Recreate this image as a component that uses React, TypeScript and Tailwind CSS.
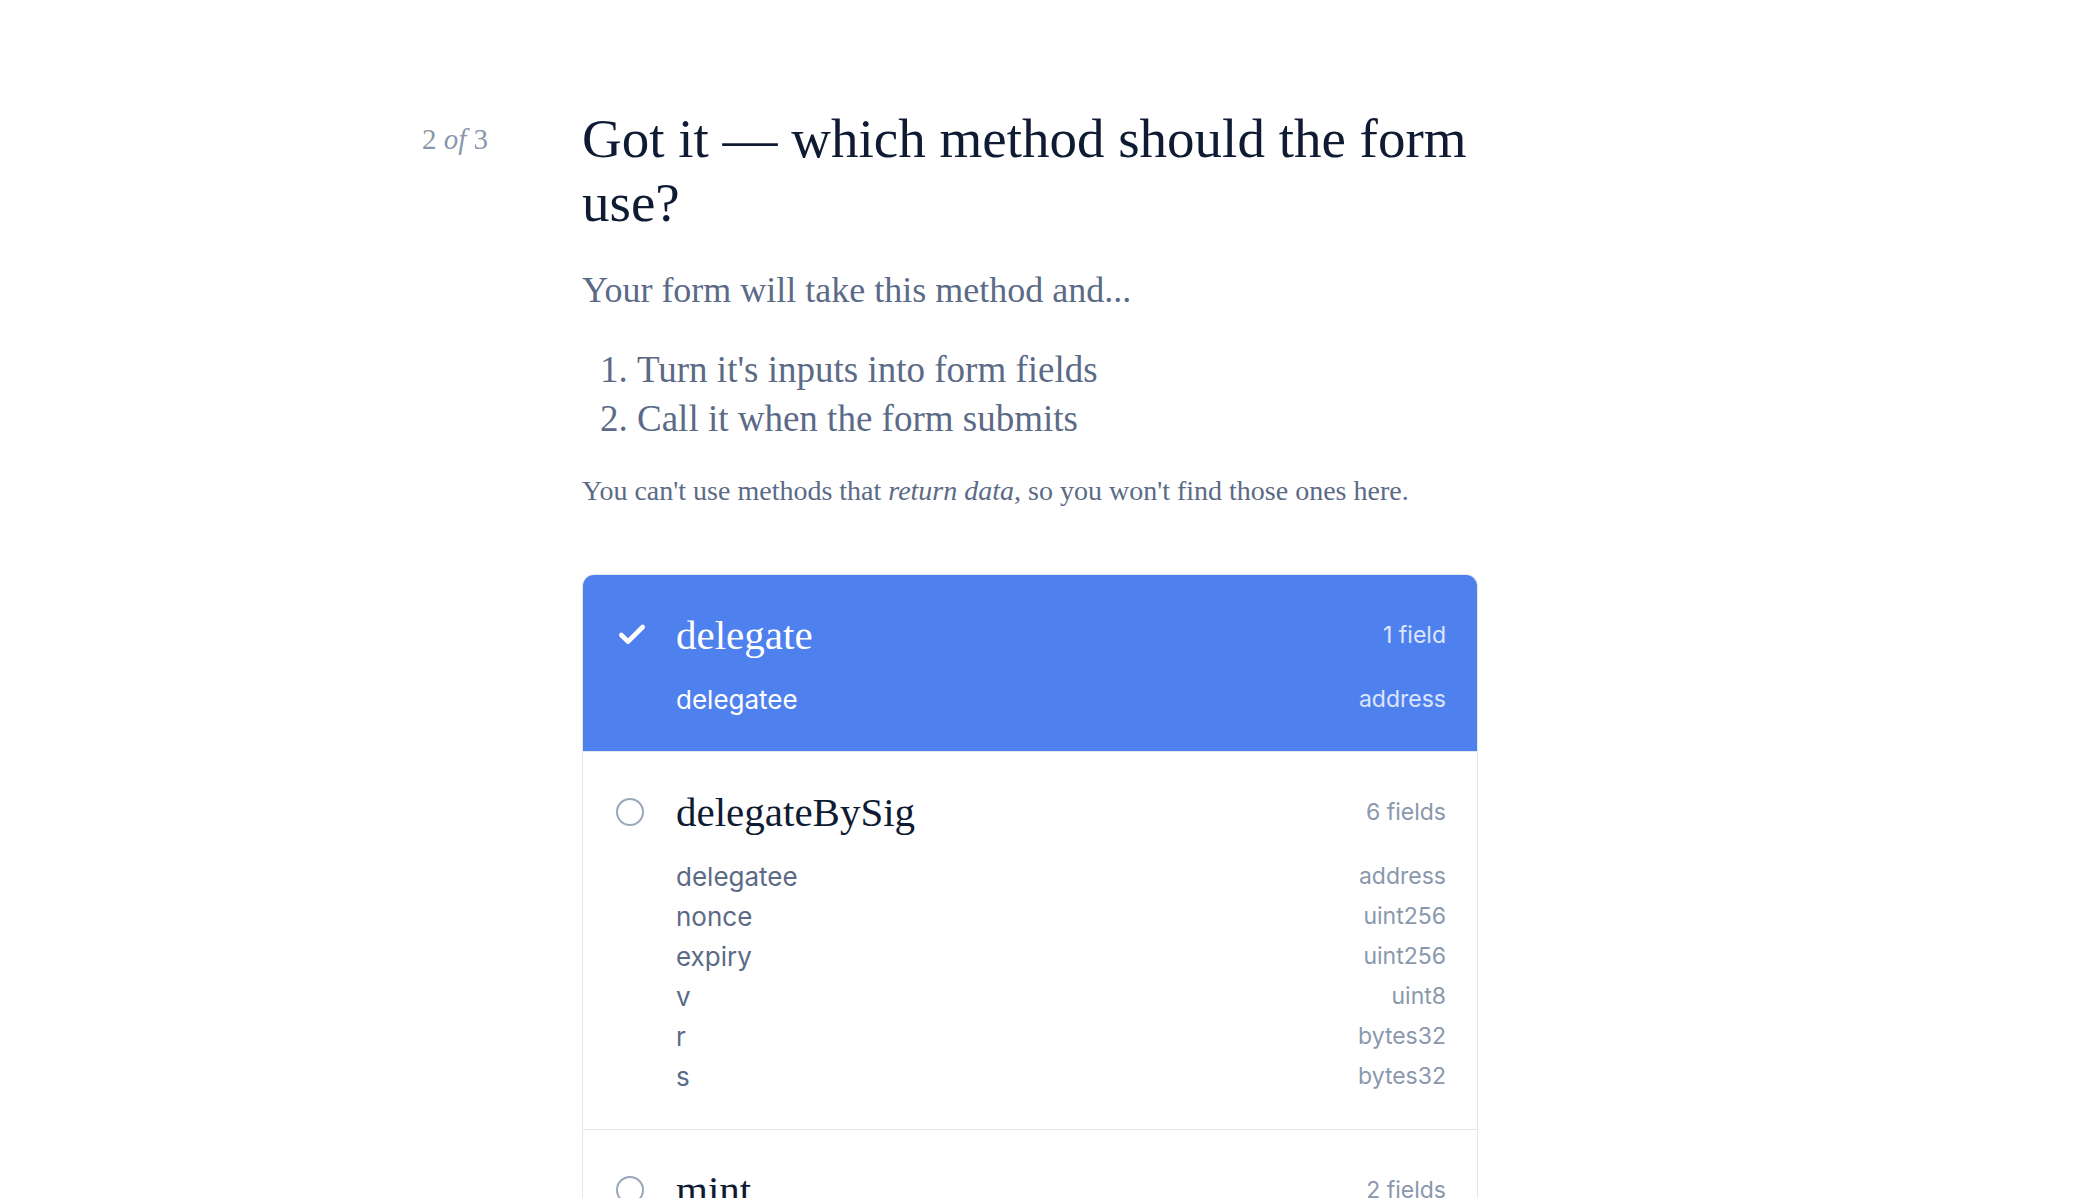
import { Check } from 'lucide-react'

interface Field {
  name: string
  type: string
}

interface Method {
  name: string
  fields: Field[]
}

const methods: Method[] = [
  { name: 'delegate', fields: [{ name: 'delegatee', type: 'address' }] },
  {
    name: 'delegateBySig',
    fields: [
      { name: 'delegatee', type: 'address' },
      { name: 'nonce', type: 'uint256' },
      { name: 'expiry', type: 'uint256' },
      { name: 'v', type: 'uint8' },
      { name: 'r', type: 'bytes32' },
      { name: 's', type: 'bytes32' },
    ],
  },
  {
    name: 'mint',
    fields: [
      { name: 'dst', type: 'address' },
      { name: 'rawAmount', type: 'uint256' },
    ],
  },
]

const serif = "font-['Liberation_Serif',serif]"
const sans = "font-['Inter',sans-serif]"

function MethodOption({ method, selected }: { method: Method; selected: boolean }) {
  const count = method.fields.length
  return (
    <div
      className={
        selected
          ? 'bg-[#4f81ee] pl-[33px] pr-[31px] pt-[36px] pb-[32px]'
          : 'border-t border-[#e2e8f0] bg-white pl-[33px] pr-[31px] pt-[36px] pb-[33px]'
      }
    >
      <div className="flex items-center">
        <div className="flex w-[60px] shrink-0 items-center">
          {selected ? (
            <Check className="h-[32px] w-[32px] text-white" strokeWidth={3.5} />
          ) : (
            <span className="block h-[28px] w-[28px] rounded-full border-2 border-[#9aa6ba]" />
          )}
        </div>
        <div
          className={`${serif} flex-1 text-[41px] leading-[48px] ${
            selected ? 'text-white' : 'text-[#0f1b33]'
          }`}
        >
          {method.name}
        </div>
        <div
          className={`${sans} text-[23px] ${selected ? 'text-white/80' : 'text-[#8a97ad]'}`}
        >
          {count} {count === 1 ? 'field' : 'fields'}
        </div>
      </div>
      <div className="mt-[20px] pl-[60px]">
        {method.fields.map((f) => (
          <div key={f.name} className={`${sans} flex h-[40px] items-center justify-between text-[26px]`}>
            <span className={selected ? 'text-white' : 'text-[#5b6a86]'}>{f.name}</span>
            <span className={`text-[23px] ${selected ? 'text-white/80' : 'text-[#8a97ad]'}`}>{f.type}</span>
          </div>
        ))}
      </div>
    </div>
  )
}

export default function App() {
  return (
    <div className="min-h-screen bg-white">
      <div className="mx-auto flex w-[1248px] pt-[107px]">
        <div className={`${serif} w-[160px] shrink-0 text-[29px] leading-[64px] text-[#8a97ad]`}>
          2 <i>of</i> 3
        </div>
        <div className="w-[896px]">
          <h1 className={`${serif} text-[55px] leading-[64px] text-[#0f1b33]`}>
            Got it — which method should the form use?
          </h1>
          <p className={`${serif} mt-[33px] text-[36px] leading-[44px] text-[#5b6a86]`}>
            Your form will take this method and...
          </p>
          <ol className={`${serif} mt-[33px] list-decimal pl-[55px] text-[37px] leading-[49px] text-[#5b6a86]`}>
            <li>Turn it's inputs into form fields</li>
            <li>Call it when the form submits</li>
          </ol>
          <p className={`${serif} mt-[30px] text-[28px] leading-[36px] text-[#5b6a86]`}>
            You can't use methods that <i>return data</i>, so you won't find those ones here.
          </p>
          <div className="mt-[65px] overflow-hidden rounded-[12px] border border-[#e2e8f0]">
            {methods.map((m, i) => (
              <MethodOption key={m.name} method={m} selected={i === 0} />
            ))}
          </div>
        </div>
      </div>
    </div>
  )
}
